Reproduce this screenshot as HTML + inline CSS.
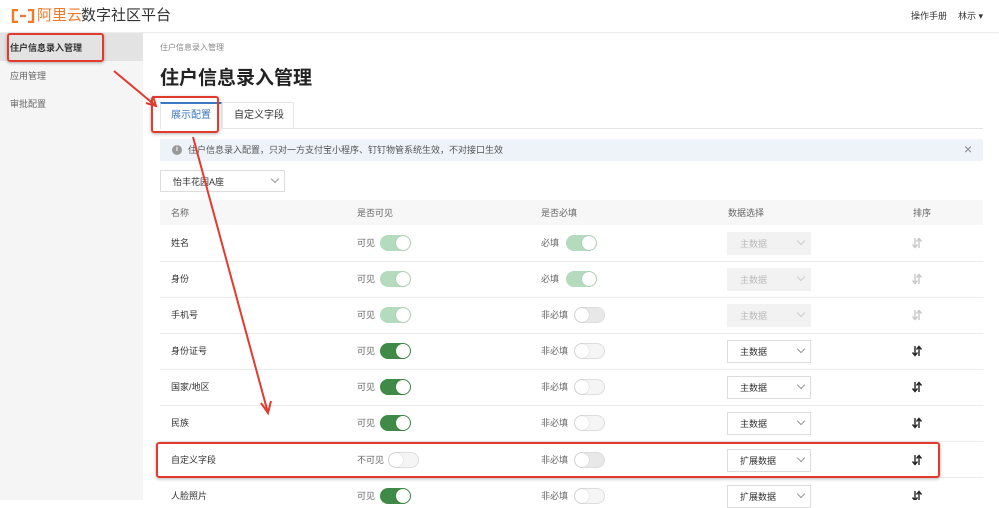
<!DOCTYPE html><html><head><meta charset="utf-8"><style>
*{margin:0;padding:0;box-sizing:border-box}
body{width:999px;height:500px;overflow:hidden;background:#fff;font-family:"Liberation Sans","Noto Sans CJK SC",sans-serif;color:#333;position:relative}
.a{position:absolute;white-space:nowrap}
.t{font-size:9px;color:#333;line-height:12px}
.g{color:#666}
.tg{position:absolute;width:31px;height:16px;border-radius:8px}
.tg i{position:absolute;top:1px;width:14px;height:14px;border-radius:50%;background:#fff;box-shadow:0 0 1px rgba(0,0,0,.3)}
.on i{right:1px}.off i{left:1px}
.lt{background:#b5dbbe}.dk{background:#3f8a46}.of{background:#f5f5f5;border:1px solid #ddd}
.of i{top:0;left:0}
.dis{background:#f2f2f2;color:#bbb}
.sel{position:absolute;width:84px;height:23px;border:1px solid #ddd;font-size:9px;line-height:12px;padding:5px 0 0 12px}
.sel.dis{border-color:#f2f2f2}
.sel b{position:absolute;right:6px;top:5px;width:6px;height:6px;border-right:1px solid #999;border-bottom:1px solid #999;transform:rotate(45deg)}
.row{position:absolute;left:160px;width:823px;height:1px;background:#ececec}
.red{position:absolute;border:2px solid #e23b2e;border-radius:3px;box-shadow:0 1px 3px rgba(0,0,0,.3)}
</style></head><body>
<div class="a" style="left:0;top:0;width:999px;height:33px;border-bottom:1px solid #eee;box-shadow:0 1px 2px rgba(0,0,0,.04)"></div>
<svg class="a" style="left:11px;top:9px" width="24" height="14"><g fill="none" stroke="#f07a2a" stroke-width="2.4"><path d="M7 1H2v12h5M17 1h5v12h-5"/><path d="M9 7h6"/></g></svg>
<div class="a" style="left:37px;top:6px;font-size:15px;line-height:20px;color:#f07a2a">阿里云</div>
<div class="a" style="left:81px;top:6px;font-size:15px;line-height:20px;color:#333">数字社区平台</div>
<div class="a" style="left:911px;top:10px;font-size:9px;line-height:12px">操作手册</div>
<div class="a" style="left:958px;top:10px;font-size:9px;line-height:12px">林示 ▾</div>
<div class="a" style="left:0;top:33px;width:143px;height:467px;background:#f5f5f5"></div>
<div class="a" style="left:0;top:33px;width:143px;height:28px;background:#e3e3e3"></div>
<div class="a t" style="left:10px;top:42px;font-weight:bold">住户信息录入管理</div>
<div class="a t g" style="left:10px;top:70px">应用管理</div>
<div class="a t g" style="left:10px;top:98px">审批配置</div>
<div class="a" style="left:160px;top:43px;font-size:8px;line-height:10px;color:#888">住户信息录入管理</div>
<div class="a" style="left:160px;top:66px;font-size:19px;line-height:26px;font-weight:bold;color:#222">住户信息录入管理</div>
<div class="a" style="left:160px;top:128px;width:823px;height:1px;background:#e5e5e5"></div>
<div class="a" style="left:160px;top:102px;width:62px;height:27px;border:1px solid #e5e5e5;border-top:2px solid #3b78c4;border-bottom:none;background:#fff"></div>
<div class="a" style="left:171px;top:109px;font-size:10px;line-height:13px;color:#3b78c4">展示配置</div>
<div class="a" style="left:222px;top:102px;width:72px;height:26px;border:1px solid #e5e5e5;border-bottom:none"></div>
<div class="a" style="left:234px;top:109px;font-size:10px;line-height:13px">自定义字段</div>
<div class="a" style="left:160px;top:139px;width:823px;height:22px;background:#edf3f9"></div>
<div class="a" style="left:172px;top:145px;width:10px;height:10px;border-radius:50%;background:#999;color:#fff;font-size:7px;text-align:center;line-height:10px;font-weight:bold">i</div>
<div class="a t" style="left:188px;top:144px;color:#555">住户信息录入配置，只对一方支付宝小程序、钉钉物管系统生效，不对接口生效</div>
<div class="a" style="left:964px;top:141px;font-size:14px;line-height:16px;color:#888">×</div>
<div class="sel" style="left:160px;top:170px;width:125px;height:22px;color:#333">怡丰花园A座<b></b></div>
<div class="a" style="left:160px;top:200px;width:823px;height:25px;background:#f7f7f7"></div>
<div class="a t g" style="left:171px;top:207px">名称</div>
<div class="a t g" style="left:357px;top:207px">是否可见</div>
<div class="a t g" style="left:541px;top:207px">是否必填</div>
<div class="a t g" style="left:728px;top:207px">数据选择</div>
<div class="a t g" style="left:913px;top:207px">排序</div>
<div class="row" style="top:261px"></div><div class="row" style="top:297px"></div><div class="row" style="top:333px"></div><div class="row" style="top:369px"></div><div class="row" style="top:405px"></div><div class="row" style="top:441px"></div><div class="row" style="top:477px"></div>

<div class="a t" style="left:171px;top:237px">姓名</div><div class="a t g" style="left:357px;top:237px">可见</div><div class="tg on lt" style="left:380px;top:235px"><i></i></div>
<div class="a t g" style="left:541px;top:237px">必填</div><div class="tg on lt" style="left:566px;top:235px"><i></i></div>
<div class="sel dis" style="left:727px;top:232px">主数据<b style="border-color:#ccc"></b></div>

<div class="a t" style="left:171px;top:273px">身份</div><div class="a t g" style="left:357px;top:273px">可见</div><div class="tg on lt" style="left:380px;top:271px"><i></i></div>
<div class="a t g" style="left:541px;top:273px">必填</div><div class="tg on lt" style="left:566px;top:271px"><i></i></div>
<div class="sel dis" style="left:727px;top:268px">主数据<b style="border-color:#ccc"></b></div>

<div class="a t" style="left:171px;top:309px">手机号</div><div class="a t g" style="left:357px;top:309px">可见</div><div class="tg on lt" style="left:380px;top:307px"><i></i></div>
<div class="a t g" style="left:541px;top:309px">非必填</div><div class="tg off of" style="left:574px;top:307px;background:#e8e8e8"><i></i></div>
<div class="sel dis" style="left:727px;top:304px">主数据<b style="border-color:#ccc"></b></div>

<div class="a t" style="left:171px;top:345px">身份证号</div><div class="a t g" style="left:357px;top:345px">可见</div><div class="tg on dk" style="left:380px;top:343px"><i></i></div>
<div class="a t g" style="left:541px;top:345px">非必填</div><div class="tg off of" style="left:574px;top:343px"><i></i></div>
<div class="sel" style="left:727px;top:340px">主数据<b></b></div>

<div class="a t" style="left:171px;top:381px">国家/地区</div><div class="a t g" style="left:357px;top:381px">可见</div><div class="tg on dk" style="left:380px;top:379px"><i></i></div>
<div class="a t g" style="left:541px;top:381px">非必填</div><div class="tg off of" style="left:574px;top:379px"><i></i></div>
<div class="sel" style="left:727px;top:376px">主数据<b></b></div>

<div class="a t" style="left:171px;top:417px">民族</div><div class="a t g" style="left:357px;top:417px">可见</div><div class="tg on dk" style="left:380px;top:415px"><i></i></div>
<div class="a t g" style="left:541px;top:417px">非必填</div><div class="tg off of" style="left:574px;top:415px"><i></i></div>
<div class="sel" style="left:727px;top:412px">主数据<b></b></div>

<div class="a t" style="left:171px;top:454px">自定义字段</div><div class="a t g" style="left:357px;top:454px">不可见</div><div class="tg off of" style="left:388px;top:452px"><i></i></div>
<div class="a t g" style="left:541px;top:454px">非必填</div><div class="tg off of" style="left:574px;top:452px;background:#e8e8e8"><i></i></div>
<div class="sel" style="left:727px;top:449px">扩展数据<b></b></div>

<div class="a t" style="left:171px;top:490px">人脸照片</div><div class="a t g" style="left:357px;top:490px">可见</div><div class="tg on dk" style="left:380px;top:488px"><i></i></div>
<div class="a t g" style="left:541px;top:490px">非必填</div><div class="tg off of" style="left:574px;top:488px"><i></i></div>
<div class="sel" style="left:727px;top:485px">扩展数据<b></b></div>

<svg class="a" style="left:0;top:0" width="999" height="500">
<defs><g id="s"><path d="M-2-5v9M-4.5 1.5l2.5 3 2.5-3M2 5v-9M-.5-1.5l2.5-3 2.5 3" fill="none" stroke-width="1.4"/></g></defs>
<use href="#s" x="917" y="243" stroke="#c8c8c8"/><use href="#s" x="917" y="279" stroke="#c8c8c8"/><use href="#s" x="917" y="315" stroke="#c8c8c8"/>
<use href="#s" x="917" y="351" stroke="#222"/><use href="#s" x="917" y="387" stroke="#222"/><use href="#s" x="917" y="423" stroke="#222"/><use href="#s" x="917" y="460" stroke="#222"/><use href="#s" x="917" y="496" stroke="#222"/>
<g stroke="#e23b2e" stroke-width="2" fill="none">
<path d="M114 71L156 106M146 103l10 3-3-10"/>
<path d="M193 137L268 413M261 403l7 10 3-12"/>
</g></svg>
<div class="red" style="left:7px;top:33px;width:97px;height:29px"></div>
<div class="red" style="left:151px;top:96px;width:68px;height:37px"></div>
<div class="red" style="left:156px;top:442px;width:784px;height:36px"></div>
</body></html>
